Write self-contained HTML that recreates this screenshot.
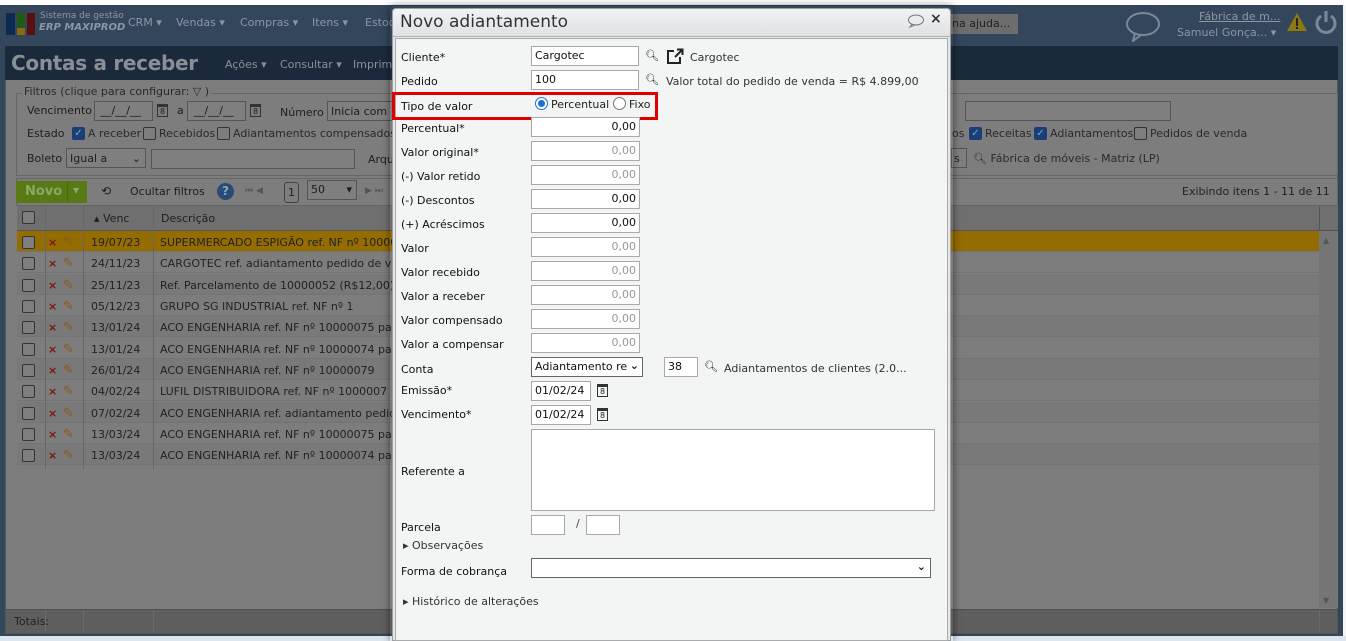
<!DOCTYPE html>
<html><head><meta charset="utf-8"><style>
*{box-sizing:border-box;margin:0;padding:0}
body{width:1346px;height:641px;overflow:hidden;position:relative;background:#7d7d7d;font-family:"DejaVu Sans","Liberation Sans",sans-serif;font-size:11px;color:#1e1e1e}
.a{position:absolute;white-space:nowrap}
.in{position:absolute;background:#fff;border:1px solid #a9a9a9;height:20px;font-size:11px;padding:2px 3px;color:#111}
.din{position:absolute;background:#7f7f7f;border:1px solid #555;height:20px;font-size:11px}
.r{text-align:right;color:#999}
.r.b{color:#111}
.cb{position:absolute;width:13px;height:13px;border:1px solid #333;border-radius:2px;background:#7e7e7e}
.cbc{background:#1a3f78;border-color:#1a3f78;color:#8aa;font-size:10px;line-height:11px;text-align:center}
.row{position:absolute;left:17px;width:1302px;height:21px;border-bottom:1px solid #747474}
.lbl{position:absolute;left:401px;font-size:11px;color:#111}
.cal{position:absolute;width:11px;height:13px;border:1px solid #333;border-top-width:3px;font-size:8px;text-align:center;line-height:9px}
</style></head><body>
<div class="a" style="left:0;top:0;width:1346px;height:5px;background:#fff"></div>
<div class="a" style="left:0;top:5px;width:1343px;height:632px;background:#34465c"></div>
<div class="a" style="left:1343px;top:5px;width:3px;height:636px;background:#f4f6f7"></div>
<div class="a" style="left:0;top:636px;width:1346px;height:5px;background:#dde6ec"></div>
<!-- logo -->
<div class="a" style="left:6px;top:13px;width:9px;height:22px;background:#0c2a52"></div>
<div class="a" style="left:17px;top:13px;width:8px;height:14px;background:#1e5a10"></div>
<div class="a" style="left:17px;top:28px;width:8px;height:7px;background:#8a6a10"></div>
<div class="a" style="left:27px;top:13px;width:8px;height:22px;background:#5a1010"></div>
<div class="a" style="left:40px;top:11px;font-size:9px;color:#8c96a2">Sistema de gestão</div>
<div class="a" style="left:39px;top:22px;font-size:10px;font-style:italic;font-weight:bold;color:#8c96a2">ERP MAXIPROD</div>
<div class="a" style="left:128px;top:16px;font-size:11px;color:#8c96a2">CRM ▾</div>
<div class="a" style="left:176px;top:16px;font-size:11px;color:#8c96a2">Vendas ▾</div>
<div class="a" style="left:240px;top:16px;font-size:11px;color:#8c96a2">Compras ▾</div>
<div class="a" style="left:312px;top:16px;font-size:11px;color:#8c96a2">Itens ▾</div>
<div class="a" style="left:365px;top:16px;font-size:11px;color:#8c96a2">Estoq</div>
<div class="a" style="left:950px;top:14px;width:68px;height:20px;background:#6d6d6d;color:#222;font-size:11px;padding:3px 2px">na ajuda...</div>
<svg class="a" style="left:1125px;top:10px" width="38" height="32"><ellipse cx="18" cy="14" rx="16" ry="11" fill="none" stroke="#7c8896" stroke-width="2"/><path d="M10 23 L8 31 L16 25" fill="none" stroke="#7c8896" stroke-width="2"/></svg>
<div class="a" style="left:1199px;top:10px;font-size:11px;color:#8c96a2;text-decoration:underline">Fábrica de m...</div>
<div class="a" style="left:1177px;top:26px;font-size:11px;color:#8c96a2">Samuel Gonça... ▾</div>
<svg class="a" style="left:1286px;top:12px" width="22" height="20"><path d="M11 1 L21 19 H1 Z" fill="#8c7a10"/><rect x="10" y="6" width="2" height="8" fill="#222"/><rect x="10" y="15" width="2" height="2" fill="#222"/></svg>
<svg class="a" style="left:1314px;top:10px" width="24" height="24"><path d="M7 6 A9 9 0 1 0 17 6" fill="none" stroke="#7c8896" stroke-width="3"/><rect x="10.5" y="1" width="3" height="11" fill="#7c8896"/></svg>
<!-- main panel -->
<div class="a" style="left:5px;top:46px;width:1333px;height:588px;background:#7d7d7d;border:1px solid #555"></div>
<div class="a" style="left:5px;top:46px;width:1333px;height:34px;background:#1b2a3a"></div>
<div class="a" style="left:11px;top:51px;font-size:20px;font-weight:bold;color:#8a8f95;letter-spacing:-.3px">Contas a receber</div>
<div class="a" style="left:225px;top:58px;font-size:11px;color:#8a8f95">Ações ▾</div>
<div class="a" style="left:280px;top:58px;font-size:11px;color:#8a8f95">Consultar ▾</div>
<div class="a" style="left:353px;top:58px;font-size:11px;color:#8a8f95">Imprim</div>
<!-- filters -->
<div class="a" style="left:16px;top:93px;width:1322px;height:83px;border:1px solid #666"></div>
<div class="a" style="left:22px;top:85px;background:#7d7d7d;padding:0 2px;font-size:11px;color:#2a2a2a">Filtros (clique para configurar: ▽ )</div>
<div class="a" style="left:27px;top:104px">Vencimento</div>
<div class="din" style="left:94px;top:101px;width:59px;padding:2px">&nbsp;__/__/__</div>
<div class="cal" style="left:157px;top:104px">8</div>
<div class="a" style="left:177px;top:104px">a</div>
<div class="din" style="left:187px;top:101px;width:59px;padding:2px">&nbsp;__/__/__</div>
<div class="cal" style="left:250px;top:104px">8</div>
<div class="a" style="left:280px;top:106px">Número</div>
<div class="din" style="left:327px;top:101px;width:70px;padding:3px 3px">Inicia com</div>
<div class="din" style="left:965px;top:101px;width:206px"></div>
<div class="a" style="left:27px;top:127px">Estado</div>
<div class="cb cbc" style="left:72px;top:127px">✓</div>
<div class="a" style="left:88px;top:127px;color:#2a2a2a">A receber</div>
<div class="cb" style="left:143px;top:127px"></div>
<div class="a" style="left:159px;top:127px;color:#2a2a2a">Recebidos</div>
<div class="cb" style="left:217px;top:127px"></div>
<div class="a" style="left:233px;top:127px;color:#2a2a2a">Adiantamentos compensados</div>
<div class="a" style="left:952px;top:127px;color:#2a2a2a">os</div>
<div class="cb cbc" style="left:969px;top:127px">✓</div>
<div class="a" style="left:985px;top:127px;color:#2a2a2a">Receitas</div>
<div class="cb cbc" style="left:1034px;top:127px">✓</div>
<div class="a" style="left:1050px;top:127px;color:#2a2a2a">Adiantamentos</div>
<div class="cb" style="left:1134px;top:127px"></div>
<div class="a" style="left:1150px;top:127px;color:#2a2a2a">Pedidos de venda</div>
<div class="a" style="left:27px;top:152px">Boleto</div>
<div class="din" style="left:66px;top:148px;width:80px;padding:3px 3px">Igual a <span style="position:absolute;right:4px">⌄</span></div>
<div class="din" style="left:151px;top:149px;width:204px"></div>
<div class="a" style="left:368px;top:153px">Arqu</div>
<div class="din" style="left:951px;top:148px;width:16px;padding:3px 2px">s</div>
<div class="a" style="left:973px;top:152px;color:#2a2a2a">🔍︎ Fábrica de móveis - Matriz (LP)</div>
<!-- toolbar -->
<div class="a" style="left:16px;top:178px;width:1322px;height:28px;border:1px solid #666"></div>
<div class="a" style="left:16px;top:181px;width:71px;height:22px;background:#577a14;border-radius:2px"></div>
<div class="a" style="left:25px;top:184px;font-size:13px;font-weight:bold;color:#8fa56a">Novo</div>
<div class="a" style="left:67px;top:181px;width:1px;height:22px;background:#4a6a10"></div>
<div class="a" style="left:73px;top:186px;font-size:8px;color:#8fa56a">▼</div>
<div class="a" style="left:101px;top:184px;font-size:12px">⟲</div>
<div class="a" style="left:130px;top:185px">Ocultar filtros</div>
<div class="a" style="left:217px;top:183px;width:17px;height:17px;border-radius:50%;background:#2a4a78;color:#8aa;font-size:12px;font-weight:bold;text-align:center;line-height:17px">?</div>
<div class="a" style="left:245px;top:186px;font-size:9px;color:#555">⏮ ◀</div>
<div class="a" style="left:284px;top:182px;width:15px;height:21px;border:1px solid #444;border-radius:3px;text-align:center;padding-top:3px">1</div>
<div class="din" style="left:307px;top:180px;width:50px;padding:2px 3px">50 <span style="position:absolute;right:4px">▾</span></div>
<div class="a" style="left:365px;top:186px;font-size:9px;color:#555">▶ ⏭</div>
<div class="a" style="left:1182px;top:185px;color:#222">Exibindo itens 1 - 11 de 11</div>
<!-- grid header -->
<div class="a" style="left:17px;top:206px;width:1321px;height:25px;background:#6f6f6f;border-bottom:1px solid #555"></div>
<div class="a" style="left:1319px;top:206px;width:1px;height:25px;background:#555"></div>
<div class="a" style="left:1319px;top:231px;width:19px;height:377px;background:#757575"></div>
<div class="cb" style="left:22px;top:211px"></div>
<div class="a" style="left:94px;top:212px">▴ Venc</div>
<div class="a" style="left:161px;top:212px">Descrição</div>
<div class="a" style="left:1323px;top:236px;font-size:8px;color:#555">▲</div>
<div class="a" style="left:1323px;top:596px;font-size:8px;color:#555">▼</div>
<div class="row" style="top:231px;background:#956c00"></div>
<div class="row" style="top:252px;background:#7d7d7d"></div>
<div class="row" style="top:274px;background:#797979"></div>
<div class="row" style="top:295px;background:#7d7d7d"></div>
<div class="row" style="top:316px;background:#797979"></div>
<div class="row" style="top:338px;background:#7d7d7d"></div>
<div class="row" style="top:359px;background:#797979"></div>
<div class="row" style="top:380px;background:#7d7d7d"></div>
<div class="row" style="top:402px;background:#797979"></div>
<div class="row" style="top:423px;background:#7d7d7d"></div>
<div class="row" style="top:444px;background:#797979"></div>
<div class="a" style="left:45px;top:206px;width:1px;height:263px;background:#666"></div>
<div class="a" style="left:83px;top:206px;width:1px;height:263px;background:#666"></div>
<div class="a" style="left:153px;top:206px;width:1px;height:263px;background:#666"></div>
<div class="a" style="left:17px;top:232px;font-size:11px;line-height:21.35px;color:#222">
<div style="position:relative">
<pre style="font-family:inherit;position:absolute;left:74px;top:0">19/07/23
24/11/23
25/11/23
05/12/23
13/01/24
13/01/24
26/01/24
04/02/24
07/02/24
13/03/24
13/03/24</pre>
<pre style="font-family:inherit;position:absolute;left:143px;top:0">SUPERMERCADO ESPIGÃO ref. NF nº 10000
CARGOTEC ref. adiantamento pedido de ve
Ref. Parcelamento de 10000052 (R$12,00)
GRUPO SG INDUSTRIAL ref. NF nº 1
ACO ENGENHARIA ref. NF nº 10000075 pa
ACO ENGENHARIA ref. NF nº 10000074 pa
ACO ENGENHARIA ref. NF nº 10000079
LUFIL DISTRIBUIDORA ref. NF nº 1000007
ACO ENGENHARIA ref. adiantamento pedid
ACO ENGENHARIA ref. NF nº 10000075 pa
ACO ENGENHARIA ref. NF nº 10000074 pa</pre>
<pre style="font-family:inherit;position:absolute;left:31px;top:0;color:#7a1414;font-weight:bold">×
×
×
×
×
×
×
×
×
×
×</pre>
<pre style="font-family:inherit;position:absolute;left:46px;top:0;color:#8a5a1a;font-size:13px;line-height:21.35px">✎
✎
✎
✎
✎
✎
✎
✎
✎
✎
✎</pre>
</div></div>
<div class="a" style="left:22px;top:236px;width:13px;height:200px">
<div class="cb" style="left:0;top:0"></div><div class="cb" style="left:0;top:21px"></div><div class="cb" style="left:0;top:43px"></div><div class="cb" style="left:0;top:64px"></div><div class="cb" style="left:0;top:85px"></div><div class="cb" style="left:0;top:107px"></div><div class="cb" style="left:0;top:128px"></div><div class="cb" style="left:0;top:149px"></div><div class="cb" style="left:0;top:171px"></div><div class="cb" style="left:0;top:192px"></div><div class="cb" style="left:0;top:213px"></div>
</div>
<!-- totals -->
<div class="a" style="left:6px;top:609px;width:1331px;height:24px;background:#5e5e5e;border-top:1px solid #505050"></div>
<div class="a" style="left:14px;top:615px;color:#222">Totais:</div>
<div class="a" style="left:45px;top:610px;width:1px;height:22px;background:#6a6a6a"></div>
<div class="a" style="left:83px;top:610px;width:1px;height:22px;background:#6a6a6a"></div>
<div class="a" style="left:153px;top:610px;width:1px;height:22px;background:#6a6a6a"></div>
<div class="a" style="left:1319px;top:610px;width:1px;height:22px;background:#6a6a6a"></div>

<!-- DIALOG -->
<div class="a" style="left:390px;top:6px;width:563px;height:635px;box-shadow:0 0 8px rgba(0,0,0,.5);border-radius:4px 4px 0 0"></div>
<div class="a" style="left:392px;top:8px;width:559px;height:633px;background:#e4e6e8;border:1px solid #9aa0a6;border-radius:4px 4px 0 0"></div>
<div class="a" style="left:392px;top:8px;width:559px;height:29px;background:linear-gradient(#f2f3f4,#dfe1e3);border-radius:4px 4px 0 0;border:1px solid #9aa0a6;border-bottom:1px solid #b0b4b8"></div>
<div class="a" style="left:400px;top:12px;font-size:17px;color:#333">Novo adiantamento</div>
<svg class="a" style="left:907px;top:14px" width="18" height="14"><ellipse cx="9" cy="6" rx="7.5" ry="5" fill="none" stroke="#777" stroke-width="1"/><path d="M5 10 L3 13 L8 10.8" fill="none" stroke="#777"/></svg>
<div class="a" style="left:930px;top:11px;font-size:14px;font-weight:bold;color:#333">×</div>
<div class="a" style="left:395px;top:38px;width:553px;height:603px;background:#f3f4f4;border:1px solid #a8aaac"></div>

<div class="lbl" style="top:51px">Cliente*</div>
<div class="in" style="left:531px;top:46px;width:108px">Cargotec</div>
<div class="a" style="left:645px;top:49px">🔍︎</div>
<svg class="a" style="left:666px;top:48px" width="18" height="17"><path d="M8 3 H2 V15 H14 V9" fill="none" stroke="#222" stroke-width="2"/><path d="M9 9 L16 2 M11 1.5 H16.5 V7" fill="none" stroke="#222" stroke-width="2"/></svg>
<div class="a" style="left:690px;top:51px;color:#333">Cargotec</div>
<div class="lbl" style="top:75px">Pedido</div>
<div class="in" style="left:531px;top:70px;width:108px">100</div>
<div class="a" style="left:645px;top:73px">🔍︎</div>
<div class="a" style="left:666px;top:75px;color:#333">Valor total do pedido de venda = R$ 4.899,00</div>
<div class="a" style="left:392px;top:92px;width:266px;height:28px;border:3px solid #e00000"></div>
<div class="lbl" style="top:100px">Tipo de valor</div>
<div class="a" style="left:535px;top:97px;width:13px;height:13px;border-radius:50%;border:1px solid #1a6fd8;background:#fff"><div style="margin:2px;width:7px;height:7px;border-radius:50%;background:#1a6fd8"></div></div>
<div class="a" style="left:551px;top:98px;color:#222">Percentual</div>
<div class="a" style="left:613px;top:97px;width:13px;height:13px;border-radius:50%;border:1px solid #777;background:#fff"></div>
<div class="a" style="left:629px;top:98px;color:#222">Fixo</div>

<div class="lbl" style="top:122px">Percentual*</div><div class="in r b" style="left:531px;top:117px;width:109px">0,00</div>
<div class="lbl" style="top:146px">Valor original*</div><div class="in r" style="left:531px;top:141px;width:109px">0,00</div>
<div class="lbl" style="top:170px">(-) Valor retido</div><div class="in r" style="left:531px;top:165px;width:109px">0,00</div>
<div class="lbl" style="top:194px">(-) Descontos</div><div class="in r b" style="left:531px;top:189px;width:109px">0,00</div>
<div class="lbl" style="top:218px">(+) Acréscimos</div><div class="in r b" style="left:531px;top:213px;width:109px">0,00</div>
<div class="lbl" style="top:242px">Valor</div><div class="in r" style="left:531px;top:237px;width:109px">0,00</div>
<div class="lbl" style="top:266px">Valor recebido</div><div class="in r" style="left:531px;top:261px;width:109px">0,00</div>
<div class="lbl" style="top:290px">Valor a receber</div><div class="in r" style="left:531px;top:285px;width:109px">0,00</div>
<div class="lbl" style="top:314px">Valor compensado</div><div class="in r" style="left:531px;top:309px;width:109px">0,00</div>
<div class="lbl" style="top:338px">Valor a compensar</div><div class="in r" style="left:531px;top:333px;width:109px">0,00</div>

<div class="lbl" style="top:363px">Conta</div>
<div class="in" style="left:531px;top:357px;width:112px;border-color:#666;overflow:hidden">Adiantamento re<span style="position:absolute;right:3px;top:1px;font-weight:bold">⌄</span></div>
<div class="in" style="left:664px;top:357px;width:34px">38</div>
<div class="a" style="left:704px;top:360px">🔍︎</div>
<div class="a" style="left:724px;top:362px;color:#333">Adiantamentos de clientes (2.0...</div>
<div class="lbl" style="top:384px">Emissão*</div>
<div class="in" style="left:531px;top:381px;width:60px">01/02/24</div>
<div class="cal" style="left:597px;top:384px">8</div>
<div class="lbl" style="top:408px">Vencimento*</div>
<div class="in" style="left:531px;top:405px;width:60px">01/02/24</div>
<div class="cal" style="left:597px;top:408px">8</div>
<div class="in" style="left:531px;top:429px;width:404px;height:82px"></div>
<div class="lbl" style="top:465px">Referente a</div>
<div class="lbl" style="top:521px">Parcela</div>
<div class="in" style="left:531px;top:515px;width:34px"></div>
<div class="a" style="left:576px;top:517px;color:#444">/</div>
<div class="in" style="left:586px;top:515px;width:34px"></div>
<div class="a" style="left:403px;top:539px;color:#333">▸ Observações</div>
<div class="lbl" style="top:565px">Forma de cobrança</div>
<div class="in" style="left:531px;top:558px;width:400px;border-color:#666"><span style="position:absolute;right:4px;top:1px;font-weight:bold">⌄</span></div>
<div class="a" style="left:403px;top:595px;color:#333">▸ Histórico de alterações</div>
</body></html>
